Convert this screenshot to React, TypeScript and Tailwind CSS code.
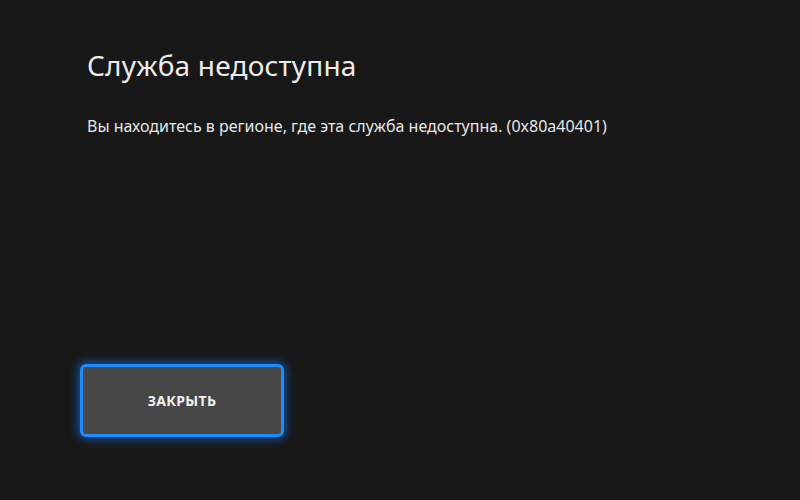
export default function App() {
  return (
    <div className="w-[800px] h-[500px] bg-[#181818] overflow-hidden font-['Noto_Sans',sans-serif] text-[#ececec]">
      <div className="pl-[87px] pt-[45px]">
        <h1 className="text-[28px] leading-[40px] font-normal tracking-[0.2px]">Служба недоступна</h1>
        <p className="mt-[30px] text-[16px] leading-[22px] text-[#e6e6e6]">
          Вы находитесь в регионе, где эта служба недоступна. (0x80a40401)
        </p>
      </div>
      <div className="pl-[80px] pt-[227px]">
        <button className="w-[204px] h-[73px] rounded-[6px] border-[3px] border-[#1a8cff] bg-[#474747] shadow-[0_0_10px_2px_rgba(20,120,255,0.6)] flex items-center justify-center">
          <span className="text-[14px] font-bold text-[#f2f2f2] tracking-[0.3px]">ЗАКРЫТЬ</span>
        </button>
      </div>
    </div>
  );
}
